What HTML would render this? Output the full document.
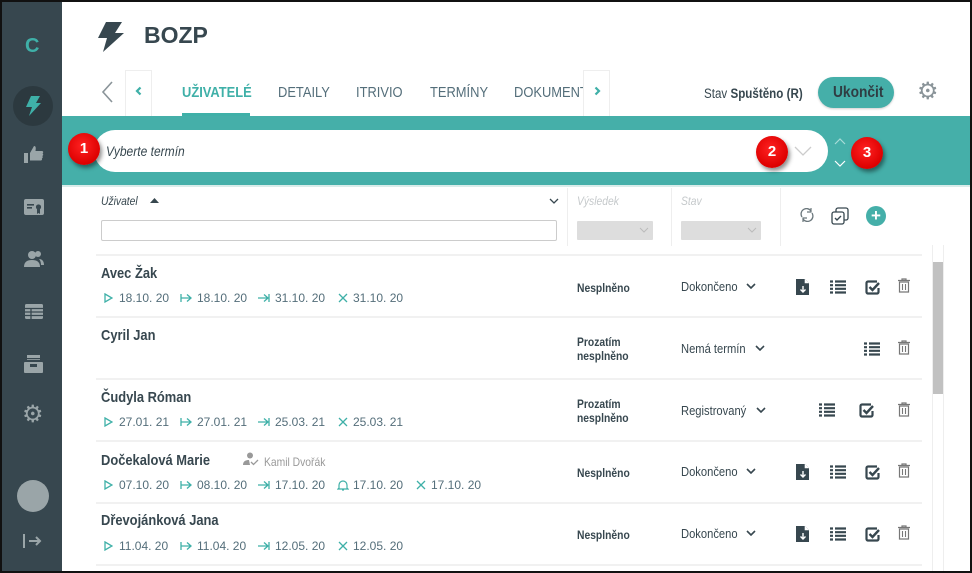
<!DOCTYPE html>
<html><head><meta charset="utf-8"><style>
*{box-sizing:border-box;margin:0;padding:0}
body{width:972px;height:573px;overflow:hidden;background:#111;font-family:"Liberation Sans",sans-serif;color:#37474f;position:relative}
.a{position:absolute}
.frame{position:absolute;left:2px;top:2px;width:968px;height:569px;background:#fff;overflow:hidden}
.side{position:absolute;left:0;top:0;width:60px;height:569px;background:#37474f}
.c{display:inline-block;transform:scaleX(.86);transform-origin:left center;white-space:nowrap}
.tab{position:absolute;top:82px;font-size:15px;color:#546e7a}
.badge{position:absolute;width:32px;height:32px;border-radius:50%;background:radial-gradient(circle at 45% 40%,#f22 0,#d00 70%);color:#fff;font-weight:bold;font-size:15px;text-align:center;line-height:32px;box-shadow:2px 3px 4px rgba(0,0,0,.45)}
.name{position:absolute;left:99px;font-weight:bold;font-size:15px;color:#37474f}
.dates{position:absolute;left:100px;font-size:12px;color:#546e7a;white-space:nowrap;height:14px}
.dates span{position:absolute;top:0}
.dates svg{position:absolute;top:2px}
.res{position:absolute;left:575px;font-weight:bold;font-size:12px;line-height:14px;color:#37474f}
.st{position:absolute;left:679px;font-size:13px;color:#37474f}
.st svg{position:absolute;top:4px}
.sep{position:absolute;left:94px;width:826px;height:2px;background:#f1f1f1}
</style></head><body>
<svg width="0" height="0" style="position:absolute"><defs>
<symbol id="doc" viewBox="0 0 14 16"><path d="M0 0h9l4 4v12H0z" fill="#37474f"/><path d="M9 0v4h4" fill="#fff" stroke="#fff" stroke-width=".6"/><path d="M7 7v6M4.5 10.5L7 13l2.5-2.5" stroke="#fff" stroke-width="1.4" fill="none"/></symbol>
<symbol id="lst" viewBox="0 0 16 14"><path d="M0 1.5h3M5 1.5h11M0 5.2h3M5 5.2h11M0 8.8h3M5 8.8h11M0 12.5h3M5 12.5h11" stroke="#37474f" stroke-width="2.2"/></symbol>
<symbol id="chk" viewBox="0 0 15 15"><path d="M12 1.5H3A1.5 1.5 0 0 0 1.5 3v9A1.5 1.5 0 0 0 3 13.5h9a1.5 1.5 0 0 0 1.5-1.5V8" stroke="#37474f" stroke-width="2.2" fill="none"/><path d="M4.5 7l3 3L14 3" stroke="#37474f" stroke-width="2.4" fill="none"/></symbol>
<symbol id="trs" viewBox="0 0 12 15"><path d="M0 2.5h12M4 2.5V1h4v1.5" stroke="#777" stroke-width="1.2" fill="none"/><path d="M1.5 4h9v10h-9z" stroke="#777" stroke-width="1.2" fill="none"/><path d="M4.5 6v6M7.5 6v6" stroke="#777" stroke-width="1.1"/></symbol>
<symbol id="dn" viewBox="0 0 10 6"><path d="M1 1l4 4 4-4" stroke="#37474f" stroke-width="1.6" fill="none"/></symbol>
<symbol id="pl" viewBox="0 0 10 10"><path d="M2 1l7 4-7 4z" stroke="#3fb0a8" stroke-width="1.3" fill="none"/></symbol>
<symbol id="st" viewBox="0 0 12 10"><path d="M1 1v8M1 5h10M7 1.5L11 5 7 8.5" stroke="#3fb0a8" stroke-width="1.3" fill="none"/></symbol>
<symbol id="en" viewBox="0 0 12 10"><path d="M11 1v8M0 5h10M6 1.5L10 5 6 8.5" stroke="#3fb0a8" stroke-width="1.3" fill="none"/></symbol>
<symbol id="x" viewBox="0 0 10 10"><path d="M1 1l8 8M9 1l-8 8" stroke="#3fb0a8" stroke-width="1.3"/></symbol>
<symbol id="bell" viewBox="0 0 12 12"><path d="M2 9V6a4 4 0 0 1 8 0v3l1 1H1z" stroke="#3fb0a8" stroke-width="1.2" fill="none"/><path d="M5 11h2" stroke="#3fb0a8" stroke-width="1.2"/></symbol>
</defs></svg>
<div class="frame">
<div class="side">
 <div class="a" style="left:23px;top:33px;color:#3fb0a8;font-weight:bold;font-size:20px">C</div>
 <div class="a" style="left:11px;top:84px;width:40px;height:40px;border-radius:50%;background:#2c393f"></div>
 <svg class="a" style="left:22px;top:94px" width="18" height="20" viewBox="0 0 18 20"><path d="M7 0h9l-4 7h5L5 20l3-9H2z" fill="#3fb0a8"/></svg>
 <svg class="a" style="left:22px;top:144px" width="20" height="18" viewBox="0 0 20 18"><rect x="0" y="7" width="4" height="10" fill="#9aa5a8"/><path d="M6 7l4-7c2 0 2 2 1.5 5H18c1.5 0 1.5 2 .5 2.5 1 .5 1 2-.3 2.5.8.5.8 2-.4 2.4.5.6.3 2.1-1 2.1H6z" fill="#9aa5a8"/></svg>
 <svg class="a" style="left:22px;top:197px" width="20" height="16" viewBox="0 0 20 16"><rect width="20" height="16" rx="2" fill="#9aa5a8"/><rect x="3" y="5" width="7" height="1.6" fill="#37474f"/><rect x="3" y="8" width="5" height="1.6" fill="#37474f"/><circle cx="14.5" cy="8" r="2.6" fill="#37474f"/><path d="M13 10v5l1.5-1 1.5 1v-5" fill="#37474f"/></svg>
 <svg class="a" style="left:22px;top:248px" width="20" height="18" viewBox="0 0 20 18"><circle cx="8" cy="5" r="4" fill="#9aa5a8"/><path d="M0 17c0-5 3-7 8-7s8 2 8 7z" fill="#9aa5a8"/><circle cx="14" cy="4" r="3" fill="#9aa5a8"/><path d="M15 9c3 0 5 2 5 6h-3c0-3-1-5-2-6z" fill="#9aa5a8"/></svg>
 <svg class="a" style="left:23px;top:302px" width="18" height="15" viewBox="0 0 18 15"><rect width="18" height="15" rx="1.5" fill="#9aa5a8"/><path d="M0 4.5h18M0 8h18M0 11.5h18M6 4.5v11" stroke="#37474f" stroke-width="1.3"/></svg>
 <svg class="a" style="left:22px;top:353px" width="19" height="18" viewBox="0 0 19 18"><rect x="3" y="0" width="13" height="5" fill="#9aa5a8"/><rect x="2" y="3" width="15" height="1.2" fill="#37474f"/><rect x="0" y="7" width="19" height="11" rx="1" fill="#9aa5a8"/><rect x="6" y="9" width="7" height="3" fill="#37474f"/></svg>
 <div class="a" style="left:20px;top:401px;font-size:24px;color:#9aa5a8;line-height:24px">⚙</div>
 <div class="a" style="left:15px;top:478px;width:32px;height:32px;border-radius:50%;background:#9aa5a8"></div>
 <svg class="a" style="left:20px;top:531px" width="20" height="16" viewBox="0 0 20 16"><path d="M2 1v14M7 8h11M14 4l4 4-4 4" stroke="#9aa5a8" stroke-width="2" fill="none"/></svg>
</div>

<svg class="a" style="left:94px;top:20px" width="28" height="30" viewBox="0 0 28 30"><path d="M10 0h16l-7 11h9L7 30l4-14H2z" fill="#37474f"/></svg>
<div class="a" style="left:142px;top:20px;font-size:23px;font-weight:bold;color:#37474f">BOZP</div>

<svg class="a" style="left:98px;top:78px" width="14" height="24" viewBox="0 0 14 24"><path d="M12 2L3 12l9 10" stroke="#8a9499" stroke-width="1.6" fill="none"/></svg>
<div class="a" style="left:123px;top:68px;width:27px;height:46px;border:1px solid #eee;border-bottom:none"></div>
<svg class="a" style="left:133px;top:84px" width="7" height="10" viewBox="0 0 7 10"><path d="M5.5 1.5L2 5l3.5 3.5" stroke="#3fb0a8" stroke-width="2.2" fill="none"/></svg>
<div class="tab" style="left:180px;color:#3fb0a8;font-weight:bold"><span class="c">UŽIVATELÉ</span></div>
<div class="a" style="left:180px;top:111px;width:68px;height:4px;background:#3fb0a8"></div>
<div class="tab" style="left:276px"><span class="c">DETAILY</span></div>
<div class="tab" style="left:354px"><span class="c">ITRIVIO</span></div>
<div class="tab" style="left:428px"><span class="c">TERMÍNY</span></div>
<div class="tab" style="left:512px;width:69px;overflow:hidden"><span class="c">DOKUMENTY</span></div>
<div class="a" style="left:581px;top:68px;width:27px;height:46px;border:1px solid #eee;border-bottom:none;background:#fff"></div>
<svg class="a" style="left:592px;top:84px" width="7" height="10" viewBox="0 0 7 10"><path d="M1.5 1.5L5 5 1.5 8.5" stroke="#3fb0a8" stroke-width="2.2" fill="none"/></svg>
<div class="a" style="left:702px;top:84px;font-size:13.5px;color:#37474f"><span class="c">Stav <b>Spuštěno (R)</b></span></div>
<div class="a" style="left:816px;top:75px;width:76px;height:31px;border-radius:16px;background:#45afa9;box-shadow:0 1px 2px rgba(0,0,0,.2)"></div>
<div class="a" style="left:831px;top:82px;font-size:16px;font-weight:bold;color:#2f3d43"><span class="c">Ukončit</span></div>
<div class="a" style="left:915px;top:78px;font-size:24px;color:#8a9499;line-height:24px">⚙</div>

<div class="a" style="left:60px;top:114px;width:910px;height:71px;background:#45afa9;border-bottom:2px solid #d9ecea"></div>
<div class="a" style="left:92px;top:128px;width:734px;height:42px;border-radius:21px;background:#fff"></div>
<div class="a" style="left:104px;top:141px;font-size:14px;font-style:italic;color:#37474f"><span class="c">Vyberte termín</span></div>
<svg class="a" style="left:792px;top:144px" width="18" height="10" viewBox="0 0 18 10"><path d="M1 1l8 8 8-8" stroke="#ccc" stroke-width="1.3" fill="none"/></svg>
<svg class="a" style="left:832px;top:135px" width="12" height="32" viewBox="0 0 12 32"><path d="M1 7l5-5 5 5" stroke="#a8dcd8" stroke-width="1.2" fill="none"/><path d="M1 24l5 5 5-5" stroke="#fff" stroke-width="1.2" fill="none"/></svg>
<div class="badge" style="left:66px;top:131px">1</div>
<div class="badge" style="left:754px;top:134px">2</div>
<div class="badge" style="left:849px;top:135px">3</div>

<div class="a" style="left:99px;top:192px;font-size:12px;font-style:italic;color:#37474f"><span class="c">Uživatel</span></div>
<svg class="a" style="left:148px;top:196px" width="9" height="5" viewBox="0 0 9 5"><path d="M0 5L4.5 0 9 5z" fill="#37474f"/></svg>
<svg class="a" style="left:547px;top:196px" width="10" height="6" viewBox="0 0 10 6"><path d="M1 1l4 4 4-4" stroke="#37474f" stroke-width="1.3" fill="none"/></svg>
<div class="a" style="left:99px;top:218px;width:456px;height:21px;border:1px solid #ccc;border-radius:2px"></div>
<div class="a" style="left:565px;top:186px;width:1px;height:58px;background:#eee"></div>
<div class="a" style="left:669px;top:186px;width:1px;height:58px;background:#eee"></div>
<div class="a" style="left:778px;top:186px;width:1px;height:58px;background:#eee"></div>
<div class="a" style="left:575px;top:192px;font-size:12px;font-style:italic;color:#c5c9cb"><span class="c">Výsledek</span></div>
<div class="a" style="left:679px;top:192px;font-size:12px;font-style:italic;color:#c5c9cb"><span class="c">Stav</span></div>
<div class="a" style="left:575px;top:219px;width:76px;height:19px;background:#ddd;border-radius:1px"></div>
<div class="a" style="left:679px;top:219px;width:80px;height:19px;background:#ddd;border-radius:1px"></div>
<svg class="a" style="left:637px;top:225px" width="10" height="6"><path d="M1 1l4 4 4-4" stroke="#bbb" fill="none"/></svg>
<svg class="a" style="left:745px;top:225px" width="10" height="6"><path d="M1 1l4 4 4-4" stroke="#bbb" fill="none"/></svg>
<svg class="a" style="left:798px;top:206px" width="14" height="14" viewBox="0 0 14 14"><path d="M2 9A5 5 0 0 1 11 3M12 5a5 5 0 0 1-9 6" stroke="#6b777c" stroke-width="1.3" fill="none"/><path d="M11 0v4H7M3 14v-4h4" stroke="#6b777c" stroke-width="1.2" fill="none"/></svg>
<svg class="a" style="left:829px;top:205px" width="18" height="18" viewBox="0 0 18 18"><rect x="5" y="1" width="12" height="12" rx="2" stroke="#37474f" stroke-width="1.3" fill="none"/><rect x="1" y="5" width="12" height="12" rx="2" stroke="#37474f" stroke-width="1.3" fill="#fff"/><path d="M4 11l2 2 4-4" stroke="#37474f" stroke-width="1.4" fill="none"/></svg>
<div class="a" style="left:864px;top:204px;width:20px;height:20px;border-radius:50%;background:#45afa9;color:#fff;font-weight:bold;font-size:17px;line-height:20px;text-align:center">+</div>

<div class="a" style="left:930px;top:243px;width:12px;height:326px;border-left:1px solid #eee;border-right:1px solid #eee"></div>
<div class="a" style="left:931px;top:260px;width:10px;height:132px;background:#c1c1c1"></div>
<div class="sep" style="top:252px"></div>
<div class="sep" style="top:314px"></div>
<div class="sep" style="top:376px"></div>
<div class="sep" style="top:438px"></div>
<div class="sep" style="top:500px"></div>
<div class="sep" style="top:562px"></div>

<div class="name" style="top:263px"><span class="c">Avec Žak</span></div>
<div class="dates" style="top:289px"><svg width="10" height="10" style="left:1px"><use href="#pl"/></svg><span style="left:17px">18.10. 20</span><svg width="12" height="10" style="left:78px"><use href="#st"/></svg><span style="left:95px">18.10. 20</span><svg width="12" height="10" style="left:156px"><use href="#en"/></svg><span style="left:173px">31.10. 20</span><svg width="10" height="10" style="left:236px"><use href="#x"/></svg><span style="left:251px">31.10. 20</span></div>
<div class="res" style="top:279px"><span class="c">Nesplněno</span></div>
<div class="st" style="top:277px"><span class="c">Dokončeno</span><svg width="10" height="6" style="left:65px"><use href="#dn"/></svg></div>

<div class="name" style="top:325px"><span class="c">Cyril Jan</span></div>
<div class="res" style="top:333px"><span class="c">Prozatím<br>nesplněno</span></div>
<div class="st" style="top:339px"><span class="c">Nemá termín</span></div>
<svg class="a" style="left:753px;top:343px" width="10" height="6"><use href="#dn"/></svg>

<div class="name" style="top:387px"><span class="c">Čudyla Róman</span></div>
<div class="dates" style="top:413px"><svg width="10" height="10" style="left:1px"><use href="#pl"/></svg><span style="left:17px">27.01. 21</span><svg width="12" height="10" style="left:78px"><use href="#st"/></svg><span style="left:95px">27.01. 21</span><svg width="12" height="10" style="left:156px"><use href="#en"/></svg><span style="left:173px">25.03. 21</span><svg width="10" height="10" style="left:236px"><use href="#x"/></svg><span style="left:251px">25.03. 21</span></div>
<div class="res" style="top:395px"><span class="c">Prozatím<br>nesplněno</span></div>
<div class="st" style="top:401px"><span class="c">Registrovaný</span></div>
<svg class="a" style="left:754px;top:405px" width="10" height="6"><use href="#dn"/></svg>

<div class="name" style="top:450px"><span class="c">Dočekalová Marie</span></div>
<svg class="a" style="left:241px;top:450px" width="16" height="14" viewBox="0 0 16 14"><circle cx="7" cy="3.5" r="3" fill="#999"/><path d="M0 13c0-4 3-5 6-5l1 5z" fill="#999"/><path d="M8 10l2.5 2.5L15 8" stroke="#999" stroke-width="1.3" fill="none"/></svg>
<div class="a" style="left:262px;top:453px;font-size:12px;color:#999"><span class="c">Kamil Dvořák</span></div>
<div class="dates" style="top:476px"><svg width="10" height="10" style="left:1px"><use href="#pl"/></svg><span style="left:17px">07.10. 20</span><svg width="12" height="10" style="left:78px"><use href="#st"/></svg><span style="left:95px">08.10. 20</span><svg width="12" height="10" style="left:156px"><use href="#en"/></svg><span style="left:173px">17.10. 20</span><svg width="12" height="12" style="left:235px;top:1px"><use href="#bell"/></svg><span style="left:251px">17.10. 20</span><svg width="10" height="10" style="left:314px"><use href="#x"/></svg><span style="left:329px">17.10. 20</span></div>
<div class="res" style="top:464px"><span class="c">Nesplněno</span></div>
<div class="st" style="top:462px"><span class="c">Dokončeno</span><svg width="10" height="6" style="left:65px"><use href="#dn"/></svg></div>

<div class="name" style="top:510px"><span class="c">Dřevojánková Jana</span></div>
<div class="dates" style="top:537px"><svg width="10" height="10" style="left:1px"><use href="#pl"/></svg><span style="left:17px">11.04. 20</span><svg width="12" height="10" style="left:78px"><use href="#st"/></svg><span style="left:95px">11.04. 20</span><svg width="12" height="10" style="left:156px"><use href="#en"/></svg><span style="left:173px">12.05. 20</span><svg width="10" height="10" style="left:236px"><use href="#x"/></svg><span style="left:251px">12.05. 20</span></div>
<div class="res" style="top:526px"><span class="c">Nesplněno</span></div>
<div class="st" style="top:524px"><span class="c">Dokončeno</span><svg width="10" height="6" style="left:65px"><use href="#dn"/></svg></div>

<svg class="a" style="left:794px;top:277px" width="14" height="16"><use href="#doc"/></svg>
<svg class="a" style="left:828px;top:278px" width="16" height="14"><use href="#lst"/></svg>
<svg class="a" style="left:863px;top:278px" width="15" height="15"><use href="#chk"/></svg>
<svg class="a" style="left:896px;top:276px" width="12" height="15"><use href="#trs"/></svg>

<svg class="a" style="left:862px;top:340px" width="16" height="14"><use href="#lst"/></svg>
<svg class="a" style="left:896px;top:338px" width="12" height="15"><use href="#trs"/></svg>

<svg class="a" style="left:817px;top:401px" width="16" height="14"><use href="#lst"/></svg>
<svg class="a" style="left:857px;top:401px" width="15" height="15"><use href="#chk"/></svg>
<svg class="a" style="left:896px;top:400px" width="12" height="15"><use href="#trs"/></svg>

<svg class="a" style="left:794px;top:462px" width="14" height="16"><use href="#doc"/></svg>
<svg class="a" style="left:828px;top:463px" width="16" height="14"><use href="#lst"/></svg>
<svg class="a" style="left:863px;top:463px" width="15" height="15"><use href="#chk"/></svg>
<svg class="a" style="left:896px;top:461px" width="12" height="15"><use href="#trs"/></svg>

<svg class="a" style="left:794px;top:524px" width="14" height="16"><use href="#doc"/></svg>
<svg class="a" style="left:828px;top:525px" width="16" height="14"><use href="#lst"/></svg>
<svg class="a" style="left:863px;top:525px" width="15" height="15"><use href="#chk"/></svg>
<svg class="a" style="left:896px;top:523px" width="12" height="15"><use href="#trs"/></svg>
</div>
</body></html>
